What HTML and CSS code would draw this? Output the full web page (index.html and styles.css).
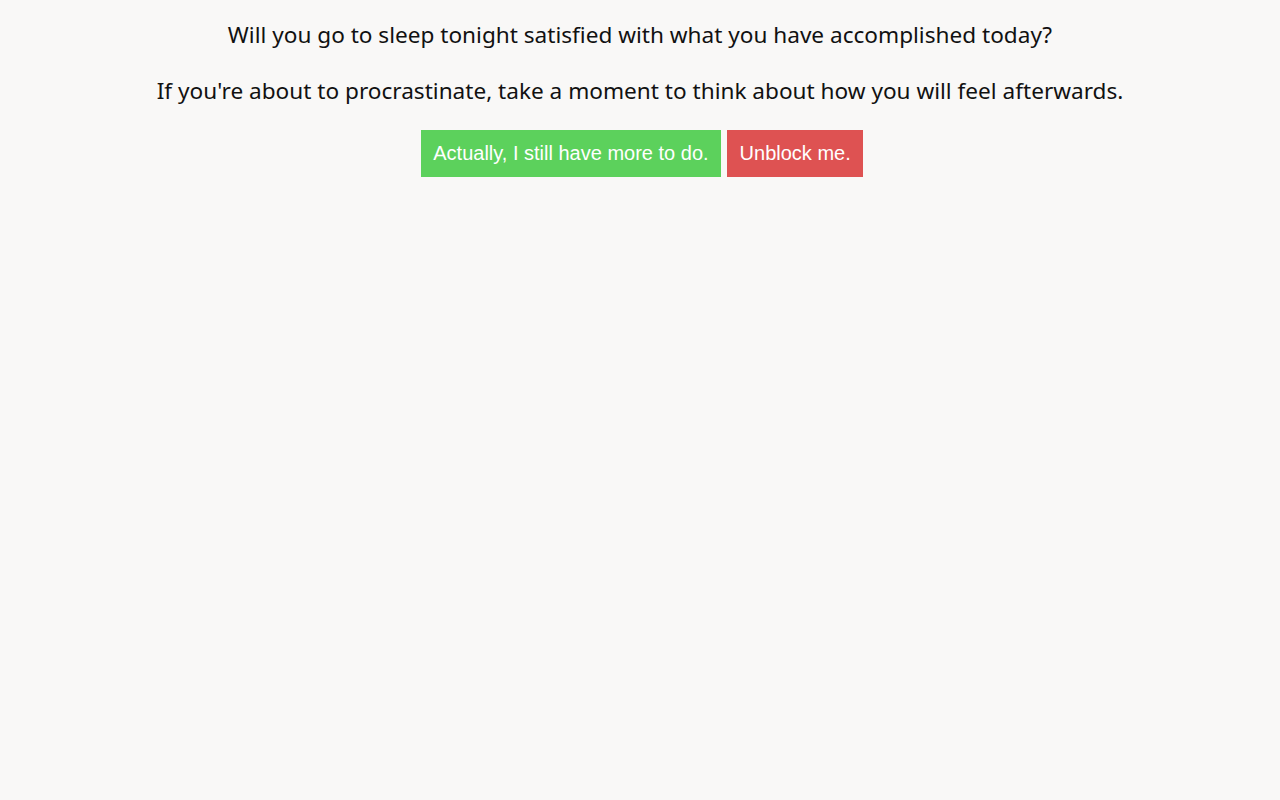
FILE: index.html
```html
<!DOCTYPE html>
<html>
<head>
<meta charset="utf-8">
<link rel="stylesheet" href="styles.css">
</head>
<body>
<main class="page">
  <p class="line">Will you go to sleep tonight satisfied with what you have accomplished today?</p>
  <p class="line">If you're about to procrastinate, take a moment to think about how you will feel afterwards.</p>
  <div class="actions">
    <button class="btn btn-green">Actually, I still have more to do.</button>
    <button class="btn btn-red">Unblock me.</button>
  </div>
</main>
</body>
</html>
```
FILE: styles.css
```css
html, body {
  margin: 0;
  padding: 0;
  background: #f9f8f7;
}
.page {
  display: flex;
  flex-direction: column;
  align-items: center;
  padding-top: 18px;
  font-family: "Noto Sans", "Open Sans", sans-serif;
  color: #111;
}
.line {
  margin: 0 0 22px 0;
  font-size: 22.6px;
  line-height: 34px;
}
.actions {
  display: flex;
  gap: 6px;
  padding-left: 4px;
}
.btn {
  border: none;
  font-family: "Liberation Sans", Arial, sans-serif;
  font-size: 20px;
  color: #fff;
  height: 47px;
  padding: 0 12.5px;
  cursor: pointer;
}
.btn-green { background: #5cd15c; }
.btn-red { background: #de5252; }
```
